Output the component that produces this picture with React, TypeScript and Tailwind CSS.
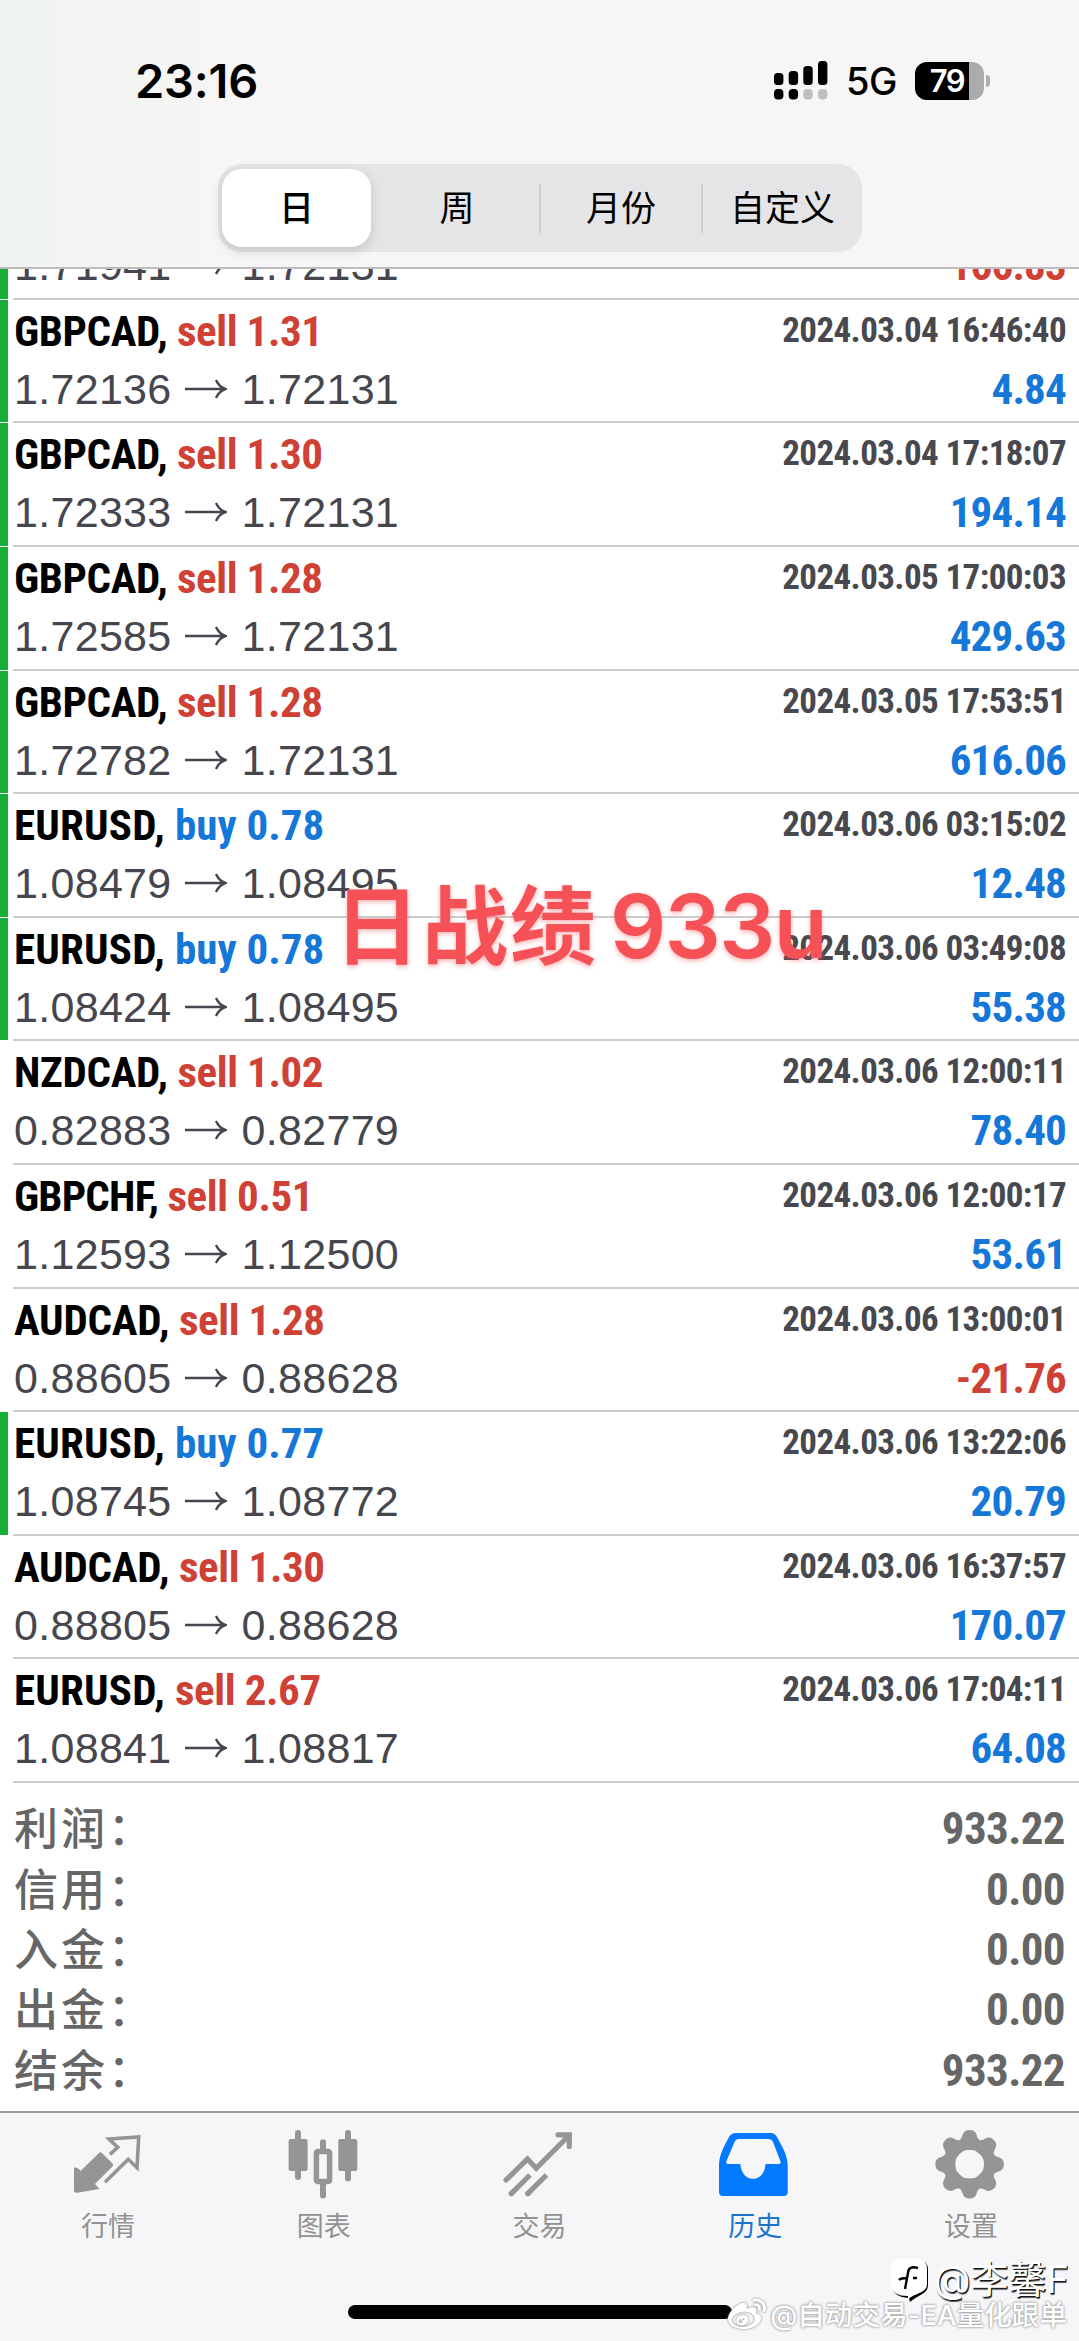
import type { ReactNode } from "react";
import { FaWeibo } from "react-icons/fa";

interface Deal {
  symbol: string;
  side: "buy" | "sell";
  volume: string;
  open: string;
  close: string;
  time: string;
  profit: string;
  marked?: boolean;
}

const deals: Deal[] = [
  { symbol: "GBPCAD", side: "sell", volume: "1.31", open: "1.72136", close: "1.72131", time: "2024.03.04 16:46:40", profit: "4.84", marked: true },
  { symbol: "GBPCAD", side: "sell", volume: "1.30", open: "1.72333", close: "1.72131", time: "2024.03.04 17:18:07", profit: "194.14", marked: true },
  { symbol: "GBPCAD", side: "sell", volume: "1.28", open: "1.72585", close: "1.72131", time: "2024.03.05 17:00:03", profit: "429.63", marked: true },
  { symbol: "GBPCAD", side: "sell", volume: "1.28", open: "1.72782", close: "1.72131", time: "2024.03.05 17:53:51", profit: "616.06", marked: true },
  { symbol: "EURUSD", side: "buy", volume: "0.78", open: "1.08479", close: "1.08495", time: "2024.03.06 03:15:02", profit: "12.48", marked: true },
  { symbol: "EURUSD", side: "buy", volume: "0.78", open: "1.08424", close: "1.08495", time: "2024.03.06 03:49:08", profit: "55.38", marked: true },
  { symbol: "NZDCAD", side: "sell", volume: "1.02", open: "0.82883", close: "0.82779", time: "2024.03.06 12:00:11", profit: "78.40" },
  { symbol: "GBPCHF", side: "sell", volume: "0.51", open: "1.12593", close: "1.12500", time: "2024.03.06 12:00:17", profit: "53.61" },
  { symbol: "AUDCAD", side: "sell", volume: "1.28", open: "0.88605", close: "0.88628", time: "2024.03.06 13:00:01", profit: "-21.76" },
  { symbol: "EURUSD", side: "buy", volume: "0.77", open: "1.08745", close: "1.08772", time: "2024.03.06 13:22:06", profit: "20.79", marked: true },
  { symbol: "AUDCAD", side: "sell", volume: "1.30", open: "0.88805", close: "0.88628", time: "2024.03.06 16:37:57", profit: "170.07" },
  { symbol: "EURUSD", side: "sell", volume: "2.67", open: "1.08841", close: "1.08817", time: "2024.03.06 17:04:11", profit: "64.08" },
];

const symbolTracking: Record<string, string> = {
  GBPCAD: "tracking-[-0.4px]",
  NZDCAD: "tracking-[-0.3px]",
  AUDCAD: "tracking-[-0.2px]",
  EURUSD: "tracking-[0.2px]",
  GBPCHF: "tracking-[-0.8px]",
};

const totals = [
  { label: "利润：", value: "933.22" },
  { label: "信用：", value: "0.00" },
  { label: "入金：", value: "0.00" },
  { label: "出金：", value: "0.00" },
  { label: "结余：", value: "933.22" },
];

function SignalIcon() {
  return (
    <svg width="54" height="39" viewBox="0 0 54 39">
      <rect x="0" y="12" width="9.4" height="12" rx="3.5" />
      <rect x="14.7" y="10" width="9.4" height="14" rx="3.5" />
      <rect x="29.3" y="5" width="9.4" height="19" rx="3.5" />
      <rect x="44" y="0" width="9.4" height="24" rx="3.5" />
      <rect x="0" y="28" width="9.4" height="10.6" rx="4" />
      <rect x="14.7" y="28" width="9.4" height="10.6" rx="4" />
      <rect x="29.3" y="28" width="9.4" height="10.6" rx="4" fill="#bfbfbf" />
      <rect x="44" y="28" width="9.4" height="10.6" rx="4" fill="#bfbfbf" />
    </svg>
  );
}

function StatusBar() {
  return (
    <div className="flex h-[160px] items-start justify-between pl-[135px] pr-[89px] font-['Inter',sans-serif]">
      <span className="mt-[54px] text-[47px] leading-[54px] font-semibold tracking-[-0.2px]">23:16</span>
      <div className="mt-[61px] flex items-center">
        <SignalIcon />
        <span className="ml-[18px] w-[69px] text-[38px] leading-[38px] font-medium tracking-[-0.5px]">5G</span>
        <div className="flex h-[38px] w-[69px] overflow-hidden rounded-[12px] bg-[#acacac]">
          <span className="flex w-[54px] items-center justify-center bg-black pl-[10px] text-[31px] leading-none font-semibold tracking-[-1.5px] text-white">
            79
          </span>
        </div>
        <div className="ml-[2px] h-[12px] w-[4px] rounded-r-full bg-[#acacac]" />
      </div>
    </div>
  );
}

/* Period switcher under the status bar */
function PeriodTabs() {
  return (
    <div className="ml-[218px] mt-[4px] flex h-[88px] w-[644px] items-center rounded-[24px] bg-[#e5e5e8] pl-[4px] text-[35px]">
      <span className="flex h-[78px] w-[149px] items-center justify-center rounded-[20px] bg-white font-medium shadow-[0_4px_12px_rgba(0,0,0,0.15)]">
        日
      </span>
      <span className="ml-[4px] flex h-[49px] w-[166px] items-center justify-center border-r-2 border-[#cfcfd3]">周</span>
      <span className="flex h-[49px] w-[162px] items-center justify-center border-r-2 border-[#cfcfd3]">月份</span>
      <span className="flex h-[49px] flex-1 items-center justify-center">自定义</span>
    </div>
  );
}

function PriceArrow() {
  return (
    <svg className="mr-[15px] ml-[13px]" width="42" height="20" viewBox="0 0 42 20" fill="none" stroke="#46464e" strokeWidth="2.4">
      <path d="M0 10H40M31 1c2 4.500 5 7.500 9.500 9c-4.500 1.500-7.500 4.500-9.500 9" />
    </svg>
  );
}

function PriceLine({ open, close, profit }: Pick<Deal, "open" | "close" | "profit">) {
  const loss = profit.startsWith("-");
  return (
    <div className="flex h-[48px] items-center justify-between text-[43px] leading-[48px]">
      <span className="flex items-center pl-[1px] font-['Liberation_Sans',sans-serif] tracking-[0.3px] text-[#46464e]">
        {open}
        <PriceArrow />
        {close}
      </span>
      <span
        className={
          loss
            ? "font-['Roboto',sans-serif] font-bold tracking-[-0.8px] text-[#cf4035] [font-stretch:75%]"
            : "font-['Roboto',sans-serif] font-bold tracking-[-0.8px] text-[#1577d8] [font-stretch:75%]"
        }
      >
        {profit}
      </span>
    </div>
  );
}

function DealRow({ deal }: { deal: Deal }) {
  return (
    <div className="flex h-[123.6px] shrink-0">
      <div className={deal.marked ? "mb-px w-[8px] bg-[#18b034]" : "w-[8px]"} />
      <div className="ml-[5px] flex-1 border-b-2 border-[#cdcdd0] pt-[6px] pr-[13px]">
        <div className="flex items-start justify-between font-['Roboto',sans-serif] font-bold [font-stretch:75%]">
          <span className="pl-[1px] text-[43px] leading-[50px] tracking-[-0.4px]">
            <span className={symbolTracking[deal.symbol]}>{deal.symbol}, </span>
            <span className={deal.side === "buy" ? "tracking-normal text-[#1577d8]" : "text-[#cf4035]"}>
              {deal.side} {deal.volume}
            </span>
          </span>
          <span className="text-[35px] leading-[49px] tracking-[-0.6px] text-[#48484f]">{deal.time}</span>
        </div>
        <div className="mt-[9px]">
          <PriceLine open={deal.open} close={deal.close} profit={deal.profit} />
        </div>
      </div>
    </div>
  );
}

function QuotesIcon() {
  return (
    <svg width="72" height="74" viewBox="0 0 72 74" fill="none">
      <path
        d="M2 41.500Q6 41 8.500 45L27 27Q28.500 25.500 30 27L40.500 37.500Q42 39 40.500 40.500L23 58L27.500 63L5 66.700Q2 67 2 64Z"
        fill="#959595"
      />
      <path d="M38 28.300L45.700 21.300L37 13L66.700 11L65 41.700L56.300 33.300L33 56.300" stroke="#959595" strokeWidth="3.600" />
    </svg>
  );
}

function ChartIcon() {
  return (
    <svg width="72" height="74" viewBox="0 0 72 74" fill="#959595">
      <rect x="7" y="4" width="6" height="50" rx="3" />
      <rect x="0.600" y="13" width="19" height="32" rx="2" />
      <rect x="57" y="4" width="6" height="51.500" rx="3" />
      <rect x="50.300" y="13" width="19" height="32" rx="2" />
      <rect x="32" y="13.300" width="6" height="14" rx="3" />
      <rect x="32" y="54" width="6" height="18.500" rx="3" />
      <rect x="28.400" y="25.500" width="13.200" height="30" rx="1.500" fill="none" stroke="#959595" strokeWidth="5.500" />
    </svg>
  );
}

function TradeIcon() {
  return (
    <svg width="72" height="74" viewBox="0 0 72 74" fill="none" stroke="#959595" strokeWidth="5.200">
      <path d="M3 54L24.500 33L33.200 42.300L66 9.500" strokeLinecap="round" />
      <path d="M55 8.800H66.300V20.500" strokeLinecap="round" />
      <path d="M27 49L7.500 68.300M43.500 49L24 68.300" />
      <path d="M9 66.800L8.200 67.600M25.500 66.800L24.700 67.600" strokeLinecap="round" />
    </svg>
  );
}

function HistoryIcon() {
  return (
    <svg width="72" height="74" viewBox="0 0 72 74" fill="#027aff" fillRule="evenodd">
      <path d="M17 7H52Q56 7 58.500 12C64 22 68.700 30 68.700 40V66Q68.700 70 64.700 70H4Q0 70 0 66V40C0 30 4 22 9.500 12Q12 7 17 7ZM20 13Q17 13 15.500 16L7.300 35.500Q6.500 38 9.300 38H21.300C22 47 27 52.700 34 52.700S46 47 46.500 38H59.500Q62.500 38 61.500 35.500L54 16Q52.500 13 49.500 13Z" />
    </svg>
  );
}

const teeth = [0, 45, 90, 135, 180, 225, 270, 315];

function SettingsIcon() {
  return (
    <svg width="72" height="74" viewBox="0 0 72 74">
      <g fill="#959595">
        {teeth.map((angle) => (
          <path
            key={angle}
            transform={`rotate(${angle} 34.600 38.300)`}
            d="M22 16C26 13.500 27 11.500 27.500 9Q29 4 34.600 4T41.700 9C42.200 11.500 43.200 13.500 47.200 16L44 24H25Z"
          />
        ))}
      </g>
      <circle cx="34.600" cy="38.300" r="20" fill="none" stroke="#959595" strokeWidth="11" />
    </svg>
  );
}

interface TabProps {
  label: string;
  active?: boolean;
  children: ReactNode;
}

function Tab({ label, active, children }: TabProps) {
  return (
    <div className={active ? "flex flex-1 flex-col items-center text-[#1a75cf]" : "flex flex-1 flex-col items-center text-[#929292]"}>
      {children}
      <span className="mt-[8px] text-[27px] leading-[38px]">{label}</span>
    </div>
  );
}

function Watermarks() {
  return (
    <>
      <div className="absolute top-[2255px] right-[10px] flex items-center">
        <svg className="mr-[4px]" width="40" height="46" viewBox="0 0 40 46">
          <path d="M11 3H27Q37 3 37 13V28C37 37 27 38 19 45L18 41Q1 40 1 28V13Q1 3 11 3Z" fill="#000" transform="translate(1 1)" />
          <path d="M11 3H27Q37 3 37 13V28C37 37 27 36 18 43V40Q1 40 1 28V13Q1 3 11 3Z" fill="#fff" />
          <path d="M28 12C22 10 18 12 18 17L15 33M9 24Q11 22 17 22M23 22H27" fill="none" stroke="#000" strokeWidth="2.400" />
        </svg>
        <span className="text-[38px] leading-[48px] text-white [text-shadow:1px_1px_0_#111,1px_2px_1px_#555]">@李馨F</span>
      </div>
      <div className="absolute top-[2295px] right-[12px] flex items-center text-white">
        <FaWeibo className="mr-[4px] h-[38px] w-[38px] drop-shadow-[0_0_1px_#777]" />
        <span className="text-[27.6px] leading-[40px] font-medium [text-shadow:0_0_3px_#999,0_0_2px_#999]">
          @自动交易-EA量化跟单
        </span>
      </div>
    </>
  );
}

export default function App() {
  return (
    <div className="relative flex h-[2341px] w-[1079px] flex-col overflow-hidden bg-white font-['Inter','Noto_Sans_CJK_SC',sans-serif] text-black">
      <header className="h-[269px] shrink-0 border-b-2 border-[#bcbcbe] bg-linear-to-r from-[#eff4f0] via-[#f7f5f5] via-20% to-[#f7f5f5]">
        <StatusBar />
        <PeriodTabs />
      </header>

      <main className="flex h-[1514px] shrink-0 flex-col">
        {/* Row scrolled partly under the header */}
        <div className="flex flex-1 overflow-hidden">
          <div className="mb-px w-[8px] bg-[#18b034]" />
          <div className="ml-[5px] flex flex-1 flex-col justify-end border-b-2 border-[#cdcdd0] pr-[13px] pb-[9px]">
            <PriceLine open="1.71941" close="1.72131" profit="-166.83" />
          </div>
        </div>
        {deals.map((deal) => (
          <DealRow key={deal.time} deal={deal} />
        ))}
      </main>

      <section className="h-[328px] shrink-0 pt-[16px] pr-[14px] pl-[14px] text-[#666]">
        {totals.map((row) => (
          <div key={row.label} className="flex h-[60.4px] items-center justify-between">
            <span className="text-[44px] leading-[60px] font-medium tracking-[3px]">{row.label}</span>
            <span className="font-['Roboto',sans-serif] text-[45px] leading-[60px] font-bold tracking-[-0.6px] [font-stretch:75%]">
              {row.value}
            </span>
          </div>
        ))}
      </section>

      <footer className="flex flex-1 flex-col border-t-2 border-[#9b9b9e] bg-[#f6f6f8]">
        <nav className="flex pt-[13px]">
          <Tab label="行情">
            <QuotesIcon />
          </Tab>
          <Tab label="图表">
            <ChartIcon />
          </Tab>
          <Tab label="交易">
            <TradeIcon />
          </Tab>
          <Tab label="历史" active>
            <HistoryIcon />
          </Tab>
          <Tab label="设置">
            <SettingsIcon />
          </Tab>
        </nav>
        <div className="mt-auto mb-[22px] h-[14px] w-[384px] self-center rounded-full bg-black" />
      </footer>

      {/* Caption laid over the list */}
      <div className="absolute top-[861px] left-[334px] flex items-baseline leading-[130px] whitespace-nowrap text-[#f55156] [text-shadow:0_2px_5px_rgba(245,81,86,0.45)]">
        <span className="text-[86px] font-bold tracking-[2px]">日战绩</span>
        <span className="ml-[12px] text-[88px] font-semibold tracking-[-1.5px]">933u</span>
      </div>

      <Watermarks />
    </div>
  );
}
